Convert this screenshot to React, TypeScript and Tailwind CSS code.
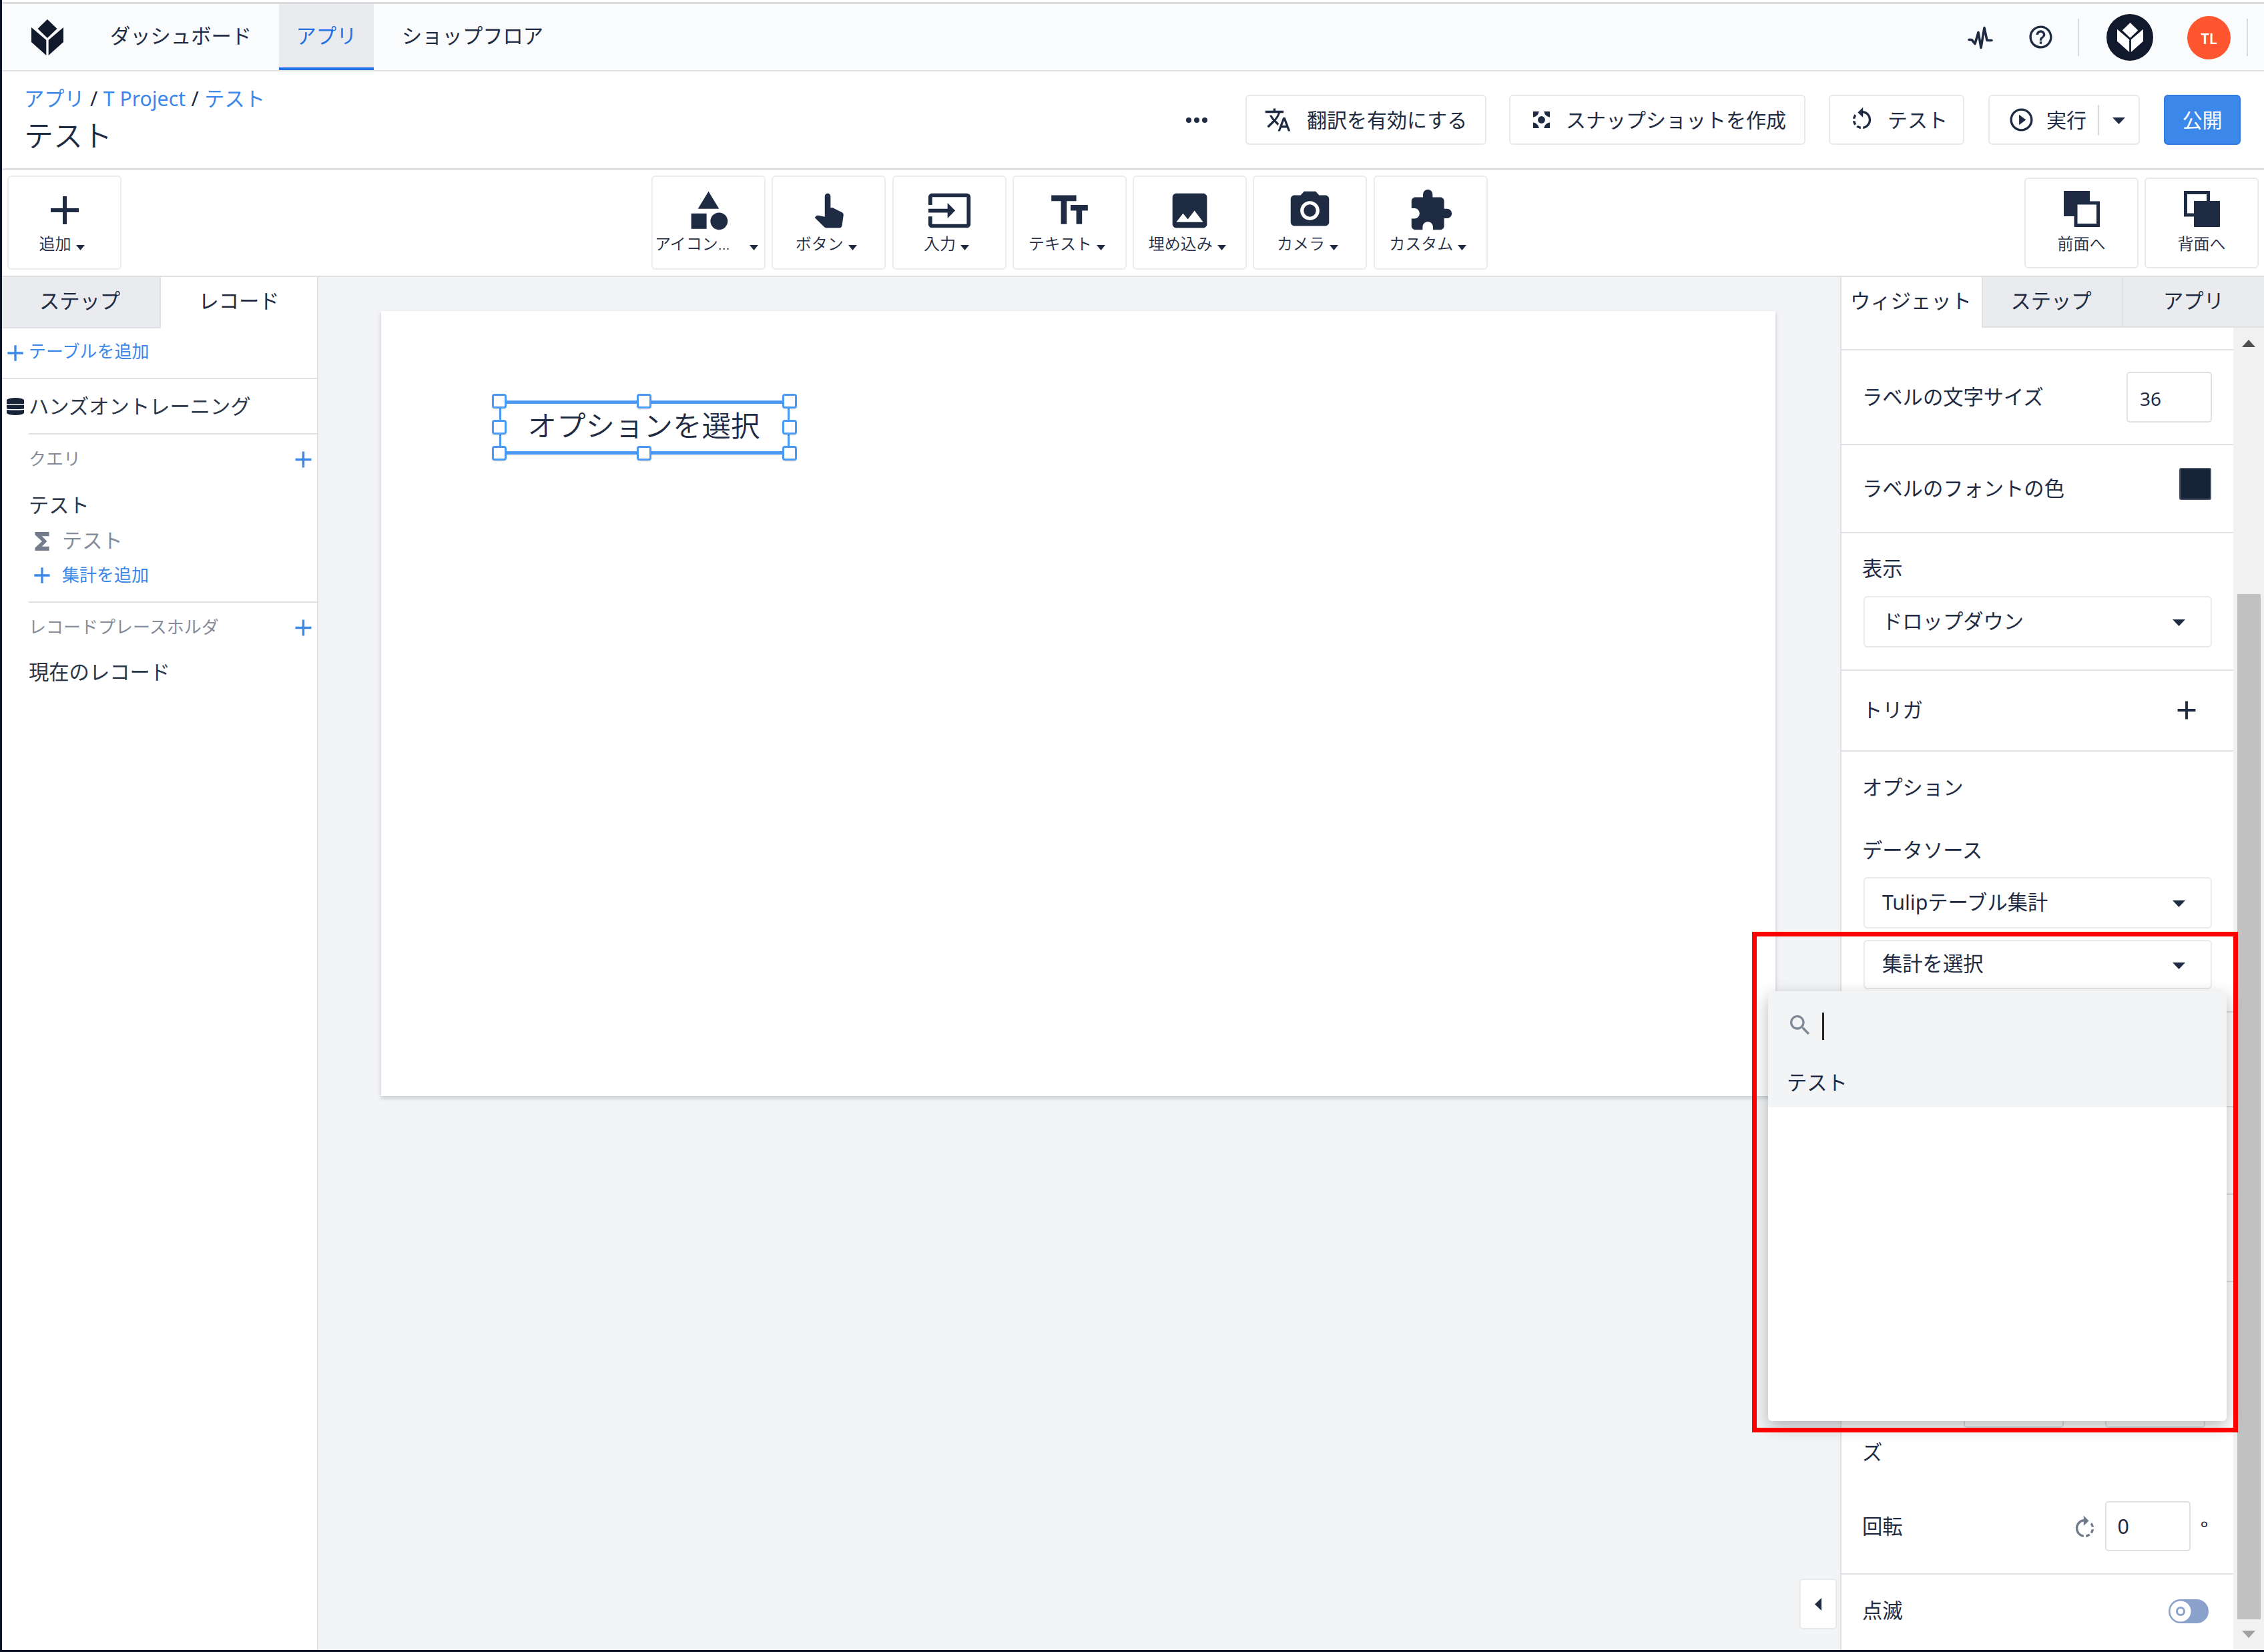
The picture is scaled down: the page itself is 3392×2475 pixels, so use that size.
import type { ReactNode } from "react";
import {
  MdAdd,
  MdCameraAlt,
  MdCategory,
  MdExtension,
  MdHelpOutline,
  MdImage,
  MdInput,
  MdPlayCircleOutline,
  MdRotateLeft,
  MdRotateRight,
  MdSearch,
  MdTextFields,
  MdTranslate,
} from "react-icons/md";

function TulipLogo({ className }: { className: string }) {
  return (
    <svg viewBox="0 0 48 54" preserveAspectRatio="none" className={className} fill="currentColor">
      <path d="M24 0 38.5 14 24 28 9.5 14Z" />
      <path d="M0 12 22.3 31V54L0 34Z" />
      <path d="M48 12 25.7 31V54L48 34Z" />
    </svg>
  );
}

function Caret({ className }: { className: string }) {
  return (
    <svg viewBox="0 0 20 10" preserveAspectRatio="none" className={className} fill="currentColor">
      <path d="M0 0h20L10 10z" />
    </svg>
  );
}

function Finger() {
  return (
    <svg viewBox="0 3 24 24" className="size-[69px]" fill="currentColor">
      <path d="M18.84 15.87l-4.54-2.26c-.17-.07-.35-.11-.54-.11H13v-6c0-.83-.67-1.5-1.5-1.5S10 6.67 10 7.5v10.74l-3.43-.72c-.08-.01-.15-.03-.24-.03-.31 0-.59.13-.79.33l-.79.8 4.94 4.94c.27.27.65.44 1.06.44h6.79c.75 0 1.33-.55 1.44-1.28l.75-5.27c.01-.07.02-.14.02-.2 0-.62-.38-1.16-.91-1.38z" />
    </svg>
  );
}

function SnapshotIcon() {
  return (
    <svg viewBox="0 0 24 24" className="size-[25px]" fill="currentColor">
      <path d="M0 0h8.5L7 4 4 7 0 8.5z" />
      <path d="M24 0v8.5L20 7l-3-3-1.5-4z" />
      <path d="M24 24h-8.5l1.5-4 3-3 4-1.5z" />
      <path d="M0 24v-8.5L4 17l3 3 1.5 4z" />
      <circle cx="12" cy="12" r="5.2" />
    </svg>
  );
}

function TableIcon() {
  return (
    <svg viewBox="0 0 26 26" className="h-[26px] w-[26px] shrink-0 text-[#172338]" fill="currentColor">
      <path d="M0 3C3 .8 7 0 13 0s10 .8 13 3v6c-8 .8-18 .8-26 0z" />
      <path d="M0 10.5c8 .8 18 .8 26 0v6c-8 .8-18 .8-26 0z" />
      <path d="M0 18c8 .8 18 .8 26 0v5c-3 2.200-7 3-13 3S3 25.200 0 23z" />
    </svg>
  );
}

function SumIcon() {
  return (
    <svg viewBox="0 0 24 24" className="size-[40px] text-[#737d8c]" fill="currentColor" stroke="currentColor" strokeWidth="0.7">
      <path d="M18 4H6v2l6.5 6L6 18v2h12v-3h-7l5-5-5-5h7z" />
    </svg>
  );
}

const tools = [
  { label: "アイコン...", icon: <MdCategory className="size-[69px]" />, wide: true },
  { label: "ボタン", icon: <Finger /> },
  { label: "入力", icon: <MdInput className="size-[69px]" /> },
  { label: "テキスト", icon: <MdTextFields className="size-[69px]" /> },
  { label: "埋め込み", icon: <MdImage className="size-[69px]" /> },
  { label: "カメラ", icon: <MdCameraAlt className="size-[69px]" /> },
  { label: "カスタム", icon: <MdExtension className="size-[69px]" /> },
];

function ToolButton({ label, icon, wide }: { label: string; icon: ReactNode; wide?: boolean }) {
  return (
    <div className="flex h-[141px] w-[171px] shrink-0 flex-col items-center rounded-[6px] border-2 border-[#ececee] bg-white">
      <div className="mt-[15px] flex h-[70px] items-center">{icon}</div>
      <div className={wide ? "mt-[2px] flex w-full items-center justify-between pl-[3px] pr-[9px]" : "mt-[2px] flex items-center gap-[7px] pr-[8px]"}>
        <span className="whitespace-nowrap text-[24px] font-[350] leading-[26px]">{label}</span>
        <Caret className="mt-[11px] h-[8px] w-[13px]" />
      </div>
    </div>
  );
}

function HeaderButton({ className, children }: { className: string; children: ReactNode }) {
  return (
    <div className={`flex h-[75px] shrink-0 items-center whitespace-nowrap rounded-[6px] border-2 border-[#e8e9ec] text-[30px] leading-[30px] ${className}`}>
      {children}
    </div>
  );
}

function Select({ label, className }: { label: string; className: string }) {
  return (
    <div className={`flex w-[522px] items-center justify-between rounded-[6px] border-2 border-[#e8e9ec] bg-white pl-[26px] pr-[38px] ${className}`}>
      <span className="pb-[2px]">{label}</span>
      <Caret className="mt-[3px] h-[10px] w-[19px]" />
    </div>
  );
}

const handles = [
  "left-[-11px] top-[-10px]",
  "left-[206px] top-[-10px]",
  "left-[424px] top-[-10px]",
  "left-[-11px] top-[29px]",
  "left-[424px] top-[29px]",
  "left-[-11px] top-[68px]",
  "left-[206px] top-[68px]",
  "left-[424px] top-[68px]",
];

function TopNav() {
  return (
    <nav className="mt-[3px] flex h-[104px] shrink-0 items-center border-b-2 border-t-[3px] border-b-[#dfe1e5] border-t-[#dcdddf] bg-[#fafbfd] text-[30.3px] leading-[30px]">
      <TulipLogo className="ml-[44px] h-[54px] w-[48px] text-[#111a2c]" />
      <span className="ml-[70px] w-[253px] pb-[4px]">ダッシュボード</span>
      <div className="flex h-full w-[142px] items-center justify-center border-b-[4px] border-[#2371e4] bg-[#eaebef] text-[#2371e4]">アプリ</div>
      <span className="ml-[42px] pb-[4px]">ショップフロア</span>
      <div className="ml-auto flex items-center">
        <svg viewBox="0 0 38 35" className="h-[36px] w-[38px]" fill="none" stroke="currentColor" strokeWidth="3.6" strokeLinejoin="round" strokeLinecap="round">
          <path d="M2 21h4l5 6 5-17 4 23 5-30 4 19h7" />
        </svg>
        <MdHelpOutline className="ml-[51px] size-[41px]" />
        <div className="ml-[35px] h-[56px] w-[2px] bg-[#d9dbe0]" />
        <div className="ml-[41px] flex size-[70px] items-center justify-center rounded-full bg-[#111a2c] text-white">
          <TulipLogo className="h-[44px] w-[39px]" />
        </div>
        <div className="ml-[51px] mt-[2px] flex size-[65px] items-center justify-center rounded-full bg-[#ff5630] text-[22px] font-semibold text-white">TL</div>
        <div className="ml-[24px] mr-[24px] h-[56px] w-[2px] bg-[#d9dbe0]" />
      </div>
    </nav>
  );
}

function AppHeader() {
  return (
    <header className="flex h-[148px] shrink-0 border-b-[3px] border-[#dfe1e5]">
      <div className="pl-[33px] pt-[26px]">
        <div className="flex gap-[8.5px] whitespace-nowrap text-[30.2px] leading-[30px]">
          <span className="text-[#3b87ea]">アプリ</span>
          <span>/</span>
          <span className="text-[#3b87ea]">T Project</span>
          <span>/</span>
          <span className="text-[#3b87ea]">テスト</span>
        </div>
        <h1 className="mt-[18px] text-[44px] font-[350] leading-[44px]">テスト</h1>
      </div>
      <div className="ml-auto mr-[35px] mt-[35px] flex h-[75px] items-center self-start">
        <div className="mr-[57px] flex gap-[4px]">
          <i className="size-[8px] rounded-full bg-[#1f2b42]" />
          <i className="size-[8px] rounded-full bg-[#1f2b42]" />
          <i className="size-[8px] rounded-full bg-[#1f2b42]" />
        </div>
        <HeaderButton className="w-[361px] pl-[26px]">
          <MdTranslate className="size-[41px]" />
          <span className="ml-[23px]">翻訳を有効にする</span>
        </HeaderButton>
        <HeaderButton className="ml-[34px] w-[444px] pl-[34px]">
          <SnapshotIcon />
          <span className="ml-[24px]">スナップショットを作成</span>
        </HeaderButton>
        <HeaderButton className="ml-[35px] w-[203px] pl-[27px]">
          <MdRotateLeft className="size-[41px]" />
          <span className="ml-[18px]">テスト</span>
        </HeaderButton>
        <HeaderButton className="ml-[36px] w-[227px] pl-[27px]">
          <MdPlayCircleOutline className="size-[41px]" />
          <span className="ml-[17px]">実行</span>
          <div className="ml-[17px] h-[46px] w-[2px] bg-[#d9dbe0]" />
          <Caret className="ml-[20px] mt-[3px] h-[10px] w-[19px]" />
        </HeaderButton>
        <div className="ml-[36px] flex h-[75px] w-[115px] items-center justify-center rounded-[6px] border-2 border-[#2f7be0] bg-[#3b87ea] text-[30px] leading-[30px] text-white">公開</div>
      </div>
    </header>
  );
}

function Toolbar() {
  return (
    <div className="flex h-[160px] shrink-0 items-start border-b-2 border-[#dfe1e5] pt-[8px]">
      <div className="ml-[8px]">
        <ToolButton label="追加" icon={<MdAdd className="size-[72px]" />} />
      </div>
      <div className="ml-[794px] flex gap-[9.3px]">
        {tools.map((t) => (
          <ToolButton key={t.label} {...t} />
        ))}
      </div>
      <div className="ml-auto mr-[8px] mt-[3px] flex gap-[9px] text-[24px] font-[350] leading-[26px]">
        <div className="flex h-[136px] w-[171px] flex-col items-center rounded-[6px] border-2 border-[#e8e9ec]">
          <svg viewBox="0 0 54 54" className="mt-[18px] size-[54px]">
            <path d="M0 0h39v16h-17v22H0z" fill="#1f2b42" />
            <path d="M18 18h33.5v33.5h-33.5z" fill="#fff" stroke="#1f2b42" strokeWidth="5" />
          </svg>
          <span className="mt-[12px]">前面へ</span>
        </div>
        <div className="flex h-[136px] w-[171px] flex-col items-center rounded-[6px] border-2 border-[#e8e9ec]">
          <svg viewBox="0 0 54 54" className="mt-[18px] size-[54px]">
            <path d="M2.5 2.5h34v33.5h-34z" fill="#fff" stroke="#1f2b42" strokeWidth="5" />
            <path d="M15 15h39v39H15z" fill="#1f2b42" />
          </svg>
          <span className="mt-[12px]">背面へ</span>
        </div>
      </div>
    </div>
  );
}

function RecordsPanel() {
  return (
    <aside className="flex w-[474px] shrink-0 flex-col whitespace-nowrap border-r-2 border-[#dfe1e5] text-[30.3px] leading-[30px]">
      <div className="flex h-[77px] shrink-0">
        <div className="flex w-[238px] items-center justify-center border-b-2 border-r-2 border-[#dfe1e5] bg-[#eaebef] pb-[4px] pr-[3px]">ステップ</div>
        <div className="flex flex-1 items-center justify-center pb-[6px]">レコード</div>
      </div>
      <div className="flex h-[76px] shrink-0 items-center border-b-2 border-[#dfe1e5] text-[26px] text-[#3b87ea]">
        <MdAdd className="size-[40px] shrink-0" />
        <span className="pb-[7px]">テーブルを追加</span>
      </div>
      <div className="flex h-[81px] items-center pl-[7px]">
        <TableIcon />
        <span className="ml-[7px] text-[#2b3648]">ハンズオントレーニング</span>
      </div>
      <div className="ml-[40px] h-[2px] bg-[#dfe1e5]" />
      <div className="flex h-[74px] items-center justify-between pl-[40px] text-[26px] text-[#868d9a]">
        <span className="pb-[3px]">クエリ</span>
        <MdAdd className="size-[41px] text-[#3b87ea]" />
      </div>
      <div className="flex h-[63px] items-center pl-[40px] text-[#2b3648]">テスト</div>
      <div className="flex h-[46px] items-center pl-[40px] text-[#868d9a]">
        <SumIcon />
        <span className="ml-[10px] pb-[2px]">テスト</span>
      </div>
      <div className="flex h-[56px] items-center pl-[40px] text-[26px] text-[#3b87ea]">
        <MdAdd className="size-[40px]" />
        <span className="ml-[10px] pb-[3px]">集計を追加</span>
      </div>
      <div className="ml-[40px] mt-[11px] h-[2px] bg-[#dfe1e5]" />
      <div className="flex h-[74px] items-center justify-between pl-[40px] text-[26px] text-[#868d9a]">
        <span className="pb-[3px]">レコードプレースホルダ</span>
        <MdAdd className="size-[41px] text-[#3b87ea]" />
      </div>
      <div className="flex h-[60px] items-center pl-[40px] text-[#2b3648]">現在のレコード</div>
    </aside>
  );
}

function Canvas() {
  return (
    <main className="relative flex-1 bg-[#f3f4f6]">
      <div className="relative ml-[94px] mt-[51px] h-[1176px] w-[2089px] bg-white shadow-[0_3px_6px_rgba(23,35,56,0.22)]">
        {/* selected widget */}
        <div className="absolute left-[177px] top-[134px] h-[81px] w-[435px] border-x-[3px] border-y-[5px] border-[#4a9af5]">
          <div className="flex h-full items-center justify-center whitespace-nowrap pb-[6px] pr-[2px] text-[43.5px] font-[350] leading-none">オプションを選択</div>
          {handles.map((pos) => (
            <div key={pos} className={`absolute size-[22px] -translate-x-[3px] -translate-y-[5px] rounded-[4px] border-[3px] border-[#4a9af5] bg-white shadow ${pos}`} />
          ))}
        </div>
      </div>
      <div className="absolute bottom-[31px] right-[5px] flex h-[76px] w-[56px] items-center justify-center rounded-[5px] border-2 border-[#e8e9ec] bg-white">
        <svg viewBox="0 0 10 19" className="h-[19px] w-[10px]" fill="currentColor">
          <path d="M10 0v19L0 9.5z" />
        </svg>
      </div>
    </main>
  );
}

function WidgetPanel() {
  return (
    <aside className="flex w-[635px] shrink-0 flex-col whitespace-nowrap border-l-2 border-[#dfe1e5] text-[30.3px] leading-[30px]">
      <div className="flex h-[76px] shrink-0">
        <div className="flex w-[210px] items-center justify-center pb-[5px] pr-[2px]">ウィジェット</div>
        <div className="flex w-[210px] items-center justify-center border-b-2 border-l-2 border-[#dfe1e5] bg-[#eaebef] pb-[3px] pr-[4px]">ステップ</div>
        <div className="flex w-[213px] items-center justify-center border-b-2 border-l-2 border-[#dfe1e5] bg-[#eaebef] pb-[3px]">アプリ</div>
      </div>
      <div className="flex flex-1">
        <div className="flex w-[587px] flex-col">
          <div className="h-[34px] border-b-2 border-[#dfe1e5]" />
          <div className="flex h-[142px] items-center justify-between border-b-2 border-[#dfe1e5] pl-[31px] pr-[32px]">
            <span>ラベルの文字サイズ</span>
            <div className="flex h-[76px] w-[128px] items-center rounded-[5px] border-2 border-[#dfe1e5] pl-[18px] pt-[3px] text-[28px]">36</div>
          </div>
          <div className="flex h-[132px] items-center justify-between border-b-2 border-[#dfe1e5] pl-[31px] pr-[33px]">
            <span>ラベルのフォントの色</span>
            <div className="mb-[14px] size-[48px] rounded-[3px] border-2 border-[#4b5568] bg-[#172338]" />
          </div>
          <div className="h-[206px] border-b-2 border-[#dfe1e5] pl-[33px] pt-[38px]">
            <div className="-ml-[2px]">表示</div>
            <Select label="ドロップダウン" className="mt-[26px] h-[77px]" />
          </div>
          <div className="flex h-[121px] items-center justify-between border-b-2 border-[#dfe1e5] pb-[2px] pl-[31px] pr-[47px]">
            <span>トリガ</span>
            <MdAdd className="size-[46px]" />
          </div>
          <div className="h-[391px] border-b-2 border-[#dfe1e5] pl-[33px] pt-[39px]">
            <div className="-ml-[2px]">オプション</div>
            <div className="-ml-[2px] mt-[64px]">データソース</div>
            <Select label="Tulipテーブル集計" className="mt-[25px] h-[77px]" />
            <Select label="集計を選択" className="mt-[17px] h-[74px]" />
          </div>
          <div className="h-[142px] border-b-2 border-[#dfe1e5]" />
          <div className="h-[131px] border-b-2 border-[#dfe1e5]" />
          <div className="h-[131px] border-b-2 border-[#dfe1e5]" />
          <div className="h-[438px] border-b-2 border-[#dfe1e5] pl-[31px] pt-[142px]">
            <div className="ml-[152px] flex gap-[62px]">
              <div className="h-[76px] w-[150px] rounded-[5px] border-2 border-[#dfe1e5]" />
              <div className="h-[76px] w-[150px] rounded-[5px] border-2 border-[#dfe1e5]" />
            </div>
            <div className="mt-[22px]">ズ</div>
            <div className="mt-[58px] flex h-[75px] items-center">
              <span>回転</span>
              <MdRotateRight className="ml-[252px] mt-[5px] size-[41px] text-[#6f7a8a]" />
              <div className="ml-[10px] flex h-[75px] w-[128px] items-center rounded-[5px] border-2 border-[#dfe1e5] pl-[17px]">0</div>
              <span className="ml-[15px] mt-[2px] text-[28px]">°</span>
            </div>
          </div>
          <div className="flex h-[110px] items-center justify-between pl-[31px] pr-[37px]">
            <span className="pb-[2px]">点滅</span>
            <svg viewBox="0 0 60 36" className="h-[36px] w-[60px]">
              <rect width="60" height="36" rx="18" fill="#8aa1cc" />
              <circle cx="18" cy="18" r="15.5" fill="#fff" />
              <circle cx="18" cy="18" r="5.5" fill="#fff" stroke="#8aa1cc" strokeWidth="3" />
            </svg>
          </div>
        </div>
        <div className="flex w-[46px] flex-col items-center bg-[#f1f1f1] text-[#505050]">
          <Caret className="mt-[18px] h-[11px] w-[20px] rotate-180" />
          <div className="mt-[370px] h-[1536px] w-[35px] bg-[#c1c1c1]" />
          <Caret className="mt-[17px] h-[11px] w-[20px] text-[#a0a0a0]" />
        </div>
      </div>
    </aside>
  );
}

export default function App() {
  return (
    <div
      lang="ja"
      className="relative flex h-[2475px] w-[3392px] flex-col overflow-hidden border-b-[3px] border-l-[3px] border-[#0b1424] bg-white font-['Noto_Sans','Noto_Sans_CJK_JP',sans-serif] text-[#1f2b42]"
    >
      <TopNav />
      <AppHeader />
      <Toolbar />
      <div className="flex min-h-0 flex-1">
        <RecordsPanel />
        <Canvas />
        <WidgetPanel />
      </div>

      {/* aggregation dropdown */}
      <div className="absolute left-[2646px] top-[1485px] h-[644px] w-[687px] rounded-[6px] bg-white shadow-[0_8px_24px_rgba(0,0,0,0.28)]">
        <div className="flex h-[174px] flex-col rounded-t-[6px] bg-[#f3f4f6] pl-[28px] text-[30.3px] leading-[30px]">
          <div className="flex h-[102px] items-center">
            <MdSearch className="size-[40px] text-[#7e8896]" />
            <div className="ml-[13px] mt-[2px] h-[41px] w-[3px] bg-[#222]" />
          </div>
          <div className="mt-[20px]">テスト</div>
        </div>
      </div>
      <div className="absolute left-[2622px] top-[1396px] h-[750px] w-[728px] border-[7px] border-[#ff0000]" />
    </div>
  );
}
